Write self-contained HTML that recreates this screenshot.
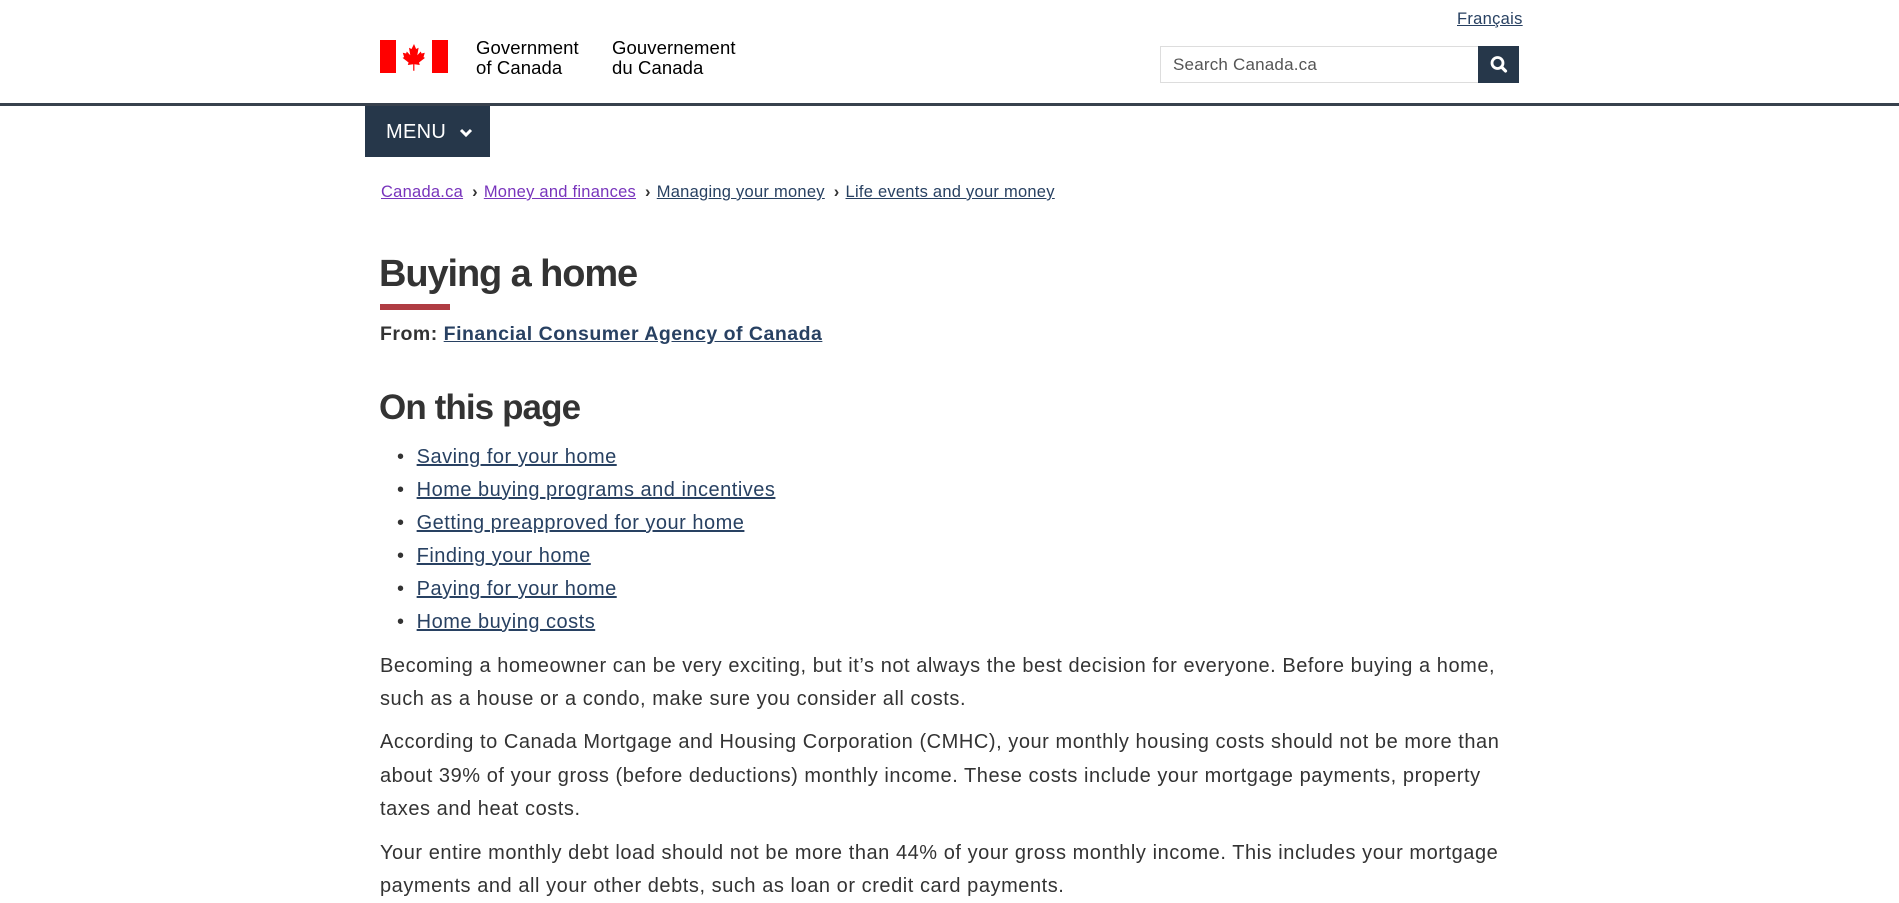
<!DOCTYPE html>
<html><head><meta charset="utf-8"><style>
*{margin:0;padding:0;box-sizing:border-box}
body{width:1899px;height:902px;overflow:hidden;background:#fff;font-family:"Liberation Sans",sans-serif;color:#333;position:relative}
.a{position:absolute;white-space:nowrap}
a{color:#284162;text-decoration:underline}
.fip{font-family:"Liberation Sans",sans-serif;font-size:18.5px;line-height:20px;color:#000;letter-spacing:0.1px}
.p{font-size:20px;letter-spacing:0.55px;color:#333}
.li{font-size:20px;letter-spacing:0.5px}
.bc{font-size:16.5px;letter-spacing:0.25px}
</style></head><body>
<a class="a" style="left:1457px;top:10px;font-size:16.5px;letter-spacing:0.3px">Français</a>
<svg class="a" style="left:380px;top:40px" width="68" height="33" viewBox="0 0 68 33">
<rect x="0" y="0" width="16" height="33" fill="#f00"/><rect x="52" y="0" width="16" height="33" fill="#f00"/>
<path fill="#f00" d="M34 4 l-2.5 5 -2.5-1.2 1.3 7.5 -3.5-3.8 -0.7 2 -3.3-0.7 1.3 4.3 -1.5 0.8 6 4.6 -0.8 2.5 5.4-0.8 0 6.5 h1.2 v-6.5 l5.4 0.8 -0.8-2.5 6-4.6 -1.5-0.8 1.3-4.3 -3.3 0.7 -0.7-2 -3.5 3.8 1.3-7.5 -2.5 1.2z"/>
</svg>
<div class="a fip" style="left:476px;top:38px">Government<br>of Canada</div>
<div class="a fip" style="left:612px;top:38px">Gouvernement<br>du Canada</div>
<div class="a" style="left:1160px;top:46px;width:319px;height:37px;border:1px solid #ddd;font-size:17px;color:#555;padding:8px 12px;letter-spacing:0.2px">Search Canada.ca</div>
<div class="a" style="left:1478px;top:46px;width:41px;height:37px;background:#26374a">
<svg width="41" height="37" viewBox="0 0 41 37"><circle cx="19.5" cy="17" r="5.5" fill="none" stroke="#fff" stroke-width="2.8"/><path d="M23.5 21 l4 4" stroke="#fff" stroke-width="3.2" stroke-linecap="round"/></svg></div>
<div class="a" style="left:0;top:103px;width:1899px;height:3px;background:#38414d"></div>
<div class="a" style="left:365px;top:106px;width:125px;height:51px;background:#26374a;color:#fff;font-size:20px;padding:15px 0 0 21px;letter-spacing:0.3px">MENU
<svg style="position:absolute;left:94px;top:21px" width="14" height="12" viewBox="0 0 14 12"><path d="M2 3 l5 5 5-5" fill="none" stroke="#fff" stroke-width="3"/></svg></div>
<div class="a bc" style="left:381px;top:183px">
<a style="color:#7834bc">Canada.ca</a><span style="color:#333;margin:0 6px 0 9px;font-weight:bold">›</span><a style="color:#7834bc">Money and finances</a><span style="color:#333;margin:0 6px 0 9px;font-weight:bold">›</span><a>Managing your money</a><span style="color:#333;margin:0 6px 0 9px;font-weight:bold">›</span><a>Life events and your money</a></div>
<h1 class="a" style="left:379px;top:251px;font-size:38px;line-height:46px;font-weight:bold;color:#333;letter-spacing:-1.1px">Buying a home</h1>
<div class="a" style="left:380px;top:304px;width:70px;height:6px;background:#af3c43"></div>
<div class="a" style="left:380px;top:323px;font-size:19.5px;font-weight:bold;letter-spacing:0.5px">From: <a>Financial Consumer Agency of Canada</a></div>
<h2 class="a" style="left:379px;top:387px;font-size:35px;line-height:42px;font-weight:bold;color:#333;letter-spacing:-0.9px">On this page</h2>
<div class="a li" style="left:397px;top:441px;line-height:33px">
<div>•&nbsp;&nbsp;<a>Saving for your home</a></div>
<div>•&nbsp;&nbsp;<a>Home buying programs and incentives</a></div>
<div>•&nbsp;&nbsp;<a>Getting preapproved for your home</a></div>
<div>•&nbsp;&nbsp;<a>Finding your home</a></div>
<div>•&nbsp;&nbsp;<a>Paying for your home</a></div>
<div>•&nbsp;&nbsp;<a>Home buying costs</a></div>
</div>
<div class="a p" style="left:380px;top:650px;line-height:33px">Becoming a homeowner can be very exciting, but it’s not always the best decision for everyone. Before buying a home,<br>such as a house or a condo, make sure you consider all costs.</div>
<div class="a p" style="left:380px;top:726px;line-height:33.5px">According to Canada Mortgage and Housing Corporation (CMHC), your monthly housing costs should not be more than<br>about 39% of your gross (before deductions) monthly income. These costs include your mortgage payments, property<br>taxes and heat costs.</div>
<div class="a p" style="left:380px;top:837px;line-height:33px">Your entire monthly debt load should not be more than 44% of your gross monthly income. This includes your mortgage<br>payments and all your other debts, such as loan or credit card payments.</div>
</body></html>
